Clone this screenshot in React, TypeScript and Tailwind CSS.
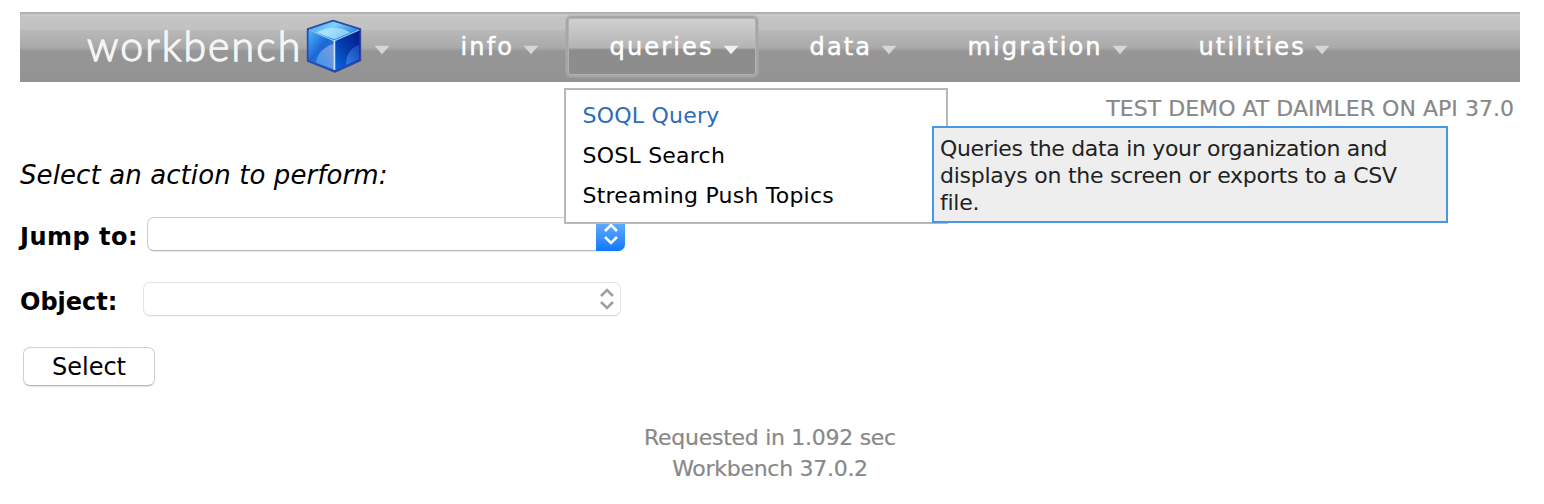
import React from "react";

function Caret({ bright = false }: { bright?: boolean }) {
  return (
    <svg width="16" height="10" viewBox="0 0 16 10" className="mt-[6px] shrink-0">
      <path d="M0.5 0.8H15.5L8 9.2Z" fill={bright ? "#f0f0f0" : "#d6d6d6"} />
    </svg>
  );
}

function Cube() {
  return (
    <svg width="56" height="54" viewBox="0 0 56 54" className="mb-[2px] shrink-0">
      <defs>
        <linearGradient id="top" x1="0" y1="0" x2="1" y2="0.4">
          <stop offset="0" stopColor="#2f9bea" />
          <stop offset="0.5" stopColor="#7fd4fc" />
          <stop offset="1" stopColor="#2b86e0" />
        </linearGradient>
        <linearGradient id="left" x1="0" y1="0" x2="0.8" y2="1">
          <stop offset="0" stopColor="#4ab8fb" />
          <stop offset="0.5" stopColor="#1f66d6" />
          <stop offset="1" stopColor="#2c8df0" />
        </linearGradient>
        <linearGradient id="right" x1="1" y1="0" x2="0.2" y2="1">
          <stop offset="0" stopColor="#04188c" />
          <stop offset="0.5" stopColor="#0538a8" />
          <stop offset="1" stopColor="#0a62d8" />
        </linearGradient>
        <linearGradient id="shineLeft" x1="0" y1="1" x2="1" y2="0.2">
          <stop offset="0" stopColor="#3a96ee" />
          <stop offset="1" stopColor="#7a98de" />
        </linearGradient>
        <linearGradient id="shineRight" x1="0" y1="1" x2="1" y2="0">
          <stop offset="0" stopColor="#3a86ee" />
          <stop offset="1" stopColor="#1c4fbe" />
        </linearGradient>
      </defs>
      <path d="M27 1.5L54.5 10V41.5L29 53L1.5 42V10Z" fill="#1d3fae" stroke="#3447a0" strokeWidth="1.4" strokeLinejoin="round" />
      <path d="M27 2.5L53 10.5L28.5 21L3 10.5Z" fill="url(#top)" />
      <path d="M10 13.5C18 9 33 6 44 13.5L28.5 20Z" fill="#c0eeff" opacity="0.6" />
      <path d="M2.5 11.5L28 22V51L2.5 41.5Z" fill="url(#left)" />
      <path d="M28 25V50L10 43.5C11 35 17 28 28 25Z" fill="url(#shineLeft)" />
      <path d="M29 22L53.5 11.5V41L29 51.5Z" fill="url(#right)" />
      <path d="M53 26V40.5L40 46C40 36 44 29 53 26Z" fill="url(#shineRight)" opacity="0.8" />
      <path d="M3 11L28.3 21.8L53 11" fill="none" stroke="#8accf6" strokeWidth="1.2" />
      <path d="M28.4 21.5V51" stroke="#c6e4fb" strokeWidth="1.7" />
    </svg>
  );
}

function NavItem({ label, className, active = false }: { label: string; className: string; active?: boolean }) {
  return (
    <div className={`${className} mr-2 flex h-[61px] items-center rounded-[5px] border-2 ${active ? "border-[#a6a6a6] bg-linear-to-b from-[#d2d2d2] via-[#b4b4b4] via-52% to-[#8d8d8d] to-56% shadow-[inset_0_0_0_1px_#b2b2b2,0_0_0_1px_#aaaaaa80]" : "border-transparent"}`}>
      <div className="flex h-9 w-full items-center justify-between pr-[17px] pl-[41.5px]">
        <span className="pt-px text-[24px] leading-[36px] tracking-[2.15px] text-white [-webkit-text-stroke:0.5px_white]">{label}</span>
        <Caret bright={active} />
      </div>
    </div>
  );
}

function Chevrons({ color }: { color: string }) {
  return (
    <svg width="16" height="22" viewBox="0 0 16 22" fill="none" stroke={color} strokeWidth="2.6">
      <path d="M2 8L8 2L14 8M2 14L8 20L14 14" />
    </svg>
  );
}

export default function App() {
  return (
    <div className="relative h-[504px] w-[1544px] overflow-hidden bg-white px-5 pt-3 font-['DejaVu_Sans',sans-serif] text-black">
      <nav className="flex h-[70px] w-[1500px] bg-[linear-gradient(to_bottom,#a9a9a9_0px,#b8b8b8_2px,#cdcdcd_3px,#c4c4c4_5px,#c2c2c2_17px,#b8b8b8_19px,#a9a9a9_36px,#969696_39px,#939393_70px)] pt-1">
        <div className="flex h-[61px] w-[397px] items-center pl-[67px]">
          <span className="mb-[1px] w-[219px] font-['Lato',sans-serif] text-[41px] leading-[58px] font-light tracking-[2.1px] text-[#f5f5f5] [-webkit-text-stroke:1.3px_#f5f5f5]">workbench</span>
          <Cube />
          <div className="ml-[12px]"><Caret /></div>
        </div>
        <NavItem label="info" className="w-[141px]" />
        <NavItem label="queries" className="w-[192px]" active />
        <NavItem label="data" className="w-[150px]" />
        <NavItem label="migration" className="w-[223px]" />
        <NavItem label="utilities" className="w-[194px]" />
      </nav>

      <div className="flex w-[1494px] justify-end pt-[11px] text-[22px] leading-8 tracking-[0.03px] text-[#888] [-webkit-text-stroke:0.2px_#888]">
        <span>TEST DEMO AT DAIMLER ON API 37.0</span>
      </div>

      <main className="flex flex-col items-start">
        <p className="mt-[34px] text-[26px] leading-[32px] tracking-[0.1px] italic">Select an action to perform:</p>
        <div className="mt-[26px] flex h-[34px] items-center">
          <label className="w-[127px] pt-[5px] text-[24px] leading-8 font-bold tracking-[0.5px] whitespace-nowrap">Jump to:</label>
          <div className="flex h-[34px] w-[478px] justify-end rounded-[7px] border border-[#d0d0d0] border-b-[#b8b8b8] shadow-[0_1px_1px_#e8e8e8]">
            <div className="-mt-px -mr-px flex h-[34px] w-[29px] items-center justify-center rounded-r-[7px] bg-linear-to-b from-[#6eb5fc] to-[#0877fd]"><Chevrons color="#fff" /></div>
          </div>
        </div>
        <div className="mt-[31px] flex h-[34px] items-center">
          <label className="w-[123px] pt-[5px] text-[24px] leading-8 font-bold whitespace-nowrap">Object:</label>
          <div className="flex h-[34px] w-[478px] items-center justify-end rounded-[7px] border border-[#e4e4e4] border-b-[#dadada] pr-[5px] shadow-[0_1px_1px_#f5f5f5]"><Chevrons color="#a0a0a0" /></div>
        </div>
        <button className="mt-[31px] ml-[3px] h-[39px] w-[132px] rounded-[7px] border border-[#d0d0d0] border-b-[#b8b8b8] text-[24px] leading-[34px] shadow-[0_1px_1px_#e4e4e4]">Select</button>
      </main>

      <footer className="mt-9 flex w-[1500px] flex-col items-center text-[22px] leading-[31px] tracking-[-0.28px] text-[#888] [-webkit-text-stroke:0.2px_#888]">
        <span>Requested in 1.092 sec</span>
        <span>Workbench 37.0.2</span>
      </footer>

      <div className="absolute top-[88px] left-[564px] flex h-[136px] w-[384px] flex-col border-2 border-[#b8b8b8] bg-white pt-[6px] pl-[16.5px] text-[22px] leading-10 tracking-[0.23px]">
        <span className="text-[#2e6cb8]">SOQL Query</span>
        <span>SOSL Search</span>
        <span>Streaming Push Topics</span>
      </div>
      <div className="absolute top-[126px] left-[932px] h-[97px] w-[516px] border-2 border-[#4797e5] bg-[#eee] pt-[7px] pl-[6px] text-[22px] leading-[27px] text-[#222]">
        <div className="tracking-[-0.32px] whitespace-nowrap">Queries the data in your organization and</div>
        <div className="tracking-[-0.25px] whitespace-nowrap">displays on the screen or exports to a CSV</div>
        <div className="tracking-[-0.25px]">file.</div>
      </div>
    </div>
  );
}
